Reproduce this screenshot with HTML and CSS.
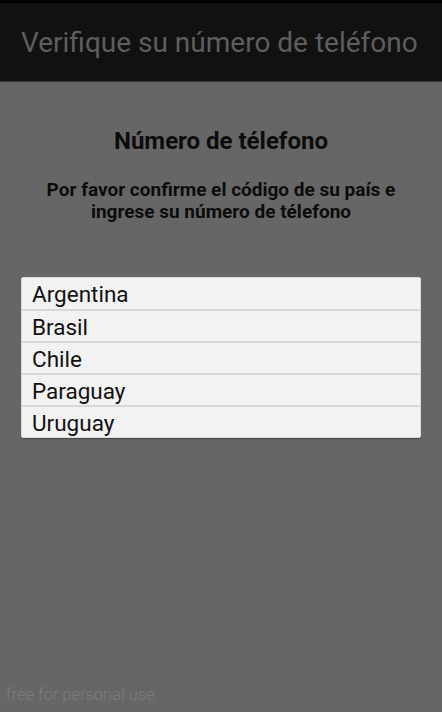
FILE: index.html
```html
<!DOCTYPE html>
<html lang="es">
<head>
<meta charset="utf-8">
<link rel="stylesheet" href="styles.css">
</head>
<body>
<div class="screen">
  <div class="status"></div>
  <header class="actionbar">Verifique su número de teléfono</header>
  <main class="content">
    <h1 class="title">Número de télefono</h1>
    <p class="subtitle">Por favor confirme el código de su país e ingrese su número de télefono</p>
    <ul class="list">
      <li class="item">Argentina</li>
      <li class="item">Brasil</li>
      <li class="item">Chile</li>
      <li class="item">Paraguay</li>
      <li class="item">Uruguay</li>
    </ul>
    <div class="spacer"></div>
    <div class="watermark">free for personal use</div>
  </main>
</div>
</body>
</html>
```
FILE: styles.css
```css
html, body {
  margin: 0;
  padding: 0;
}
body {
  font-family: Roboto, "Noto Sans", sans-serif;
  background: #666666;
}
.screen {
  width: 442px;
  height: 712px;
  display: flex;
  flex-direction: column;
  overflow: hidden;
}
.status {
  height: 3px;
  background: #000;
}
.actionbar {
  height: 79px;
  box-sizing: border-box;
  background: #111111;
  color: #5e5e5e;
  font-size: 28px;
  line-height: 80px;
  padding-left: 21px;
  border-bottom: 1px solid #3a3a3a;
  white-space: nowrap;
}
.content {
  flex: 1;
  display: flex;
  flex-direction: column;
  background: #666666;
}
.title {
  margin: 42px 0 0;
  text-align: center;
  font-size: 24px;
  line-height: 34px;
  font-weight: 700;
  color: #0c0c0c;
}
.subtitle {
  margin: 21px 24px 0;
  text-align: center;
  font-size: 19px;
  line-height: 22px;
  font-weight: 700;
  color: #0c0c0c;
}
.list {
  list-style: none;
  margin: 54px 21px 0;
  padding: 0;
  background: #f2f2f2;
  border-radius: 2px;
  border: 1px solid #dcdcdc;
  box-shadow: 0 1px 1px rgba(0,0,0,0.3);
}
.item {
  height: 32px;
  box-sizing: border-box;
  padding-left: 10px;
  font-size: 22.5px;
  line-height: 32px;
  color: #111;
  border-top: 2px solid #d8d8d8;
}
.item:first-child {
  border-top: none;
  height: 31px;
}
.spacer {
  flex: 1;
}
.watermark {
  padding: 0 0 8px 6px;
  font-size: 16.5px;
  font-weight: 300;
  color: #7c7c7c;
}
```
